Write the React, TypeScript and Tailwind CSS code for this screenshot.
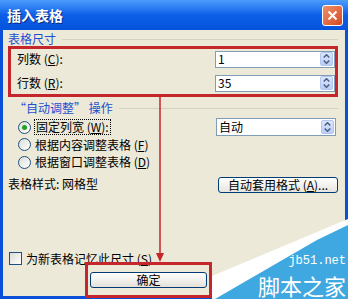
import React from 'react';

// small XP style spinner (up/down arrows)
const Spin = () => (
  <div className="w-[13px] h-[14px] rounded-[2px] border border-[#B3C6EF] bg-gradient-to-b from-[#DCE6FC] to-[#B9CDF6] flex flex-col items-center justify-center gap-[2px]">
    <svg width="7" height="4" viewBox="0 0 7 4">
      <path d="M0.7 3.5 L3.5 0.7 L6.3 3.5" fill="none" stroke="#4D6185" strokeWidth="1.5" />
    </svg>
    <svg width="7" height="4" viewBox="0 0 7 4">
      <path d="M0.7 0.5 L3.5 3.3 L6.3 0.5" fill="none" stroke="#4D6185" strokeWidth="1.5" />
    </svg>
  </div>
);

const Field = ({ value, h = 'h-[17px]' }: { value: string; h?: string }) => (
  <div className={`w-[120px] ${h} bg-white border border-[#7F9DB9] flex items-center justify-between pl-[2px] pr-[1px]`}>
    <span className="leading-none">{value}</span>
    <Spin />
  </div>
);

const Radio = ({ on }: { on?: boolean }) => (
  <div className="w-[13px] h-[13px] rounded-full border border-[#1C5180] bg-gradient-to-br from-[#DCDCD7] to-white flex items-center justify-center">
    {on && <div className="w-[5px] h-[5px] rounded-full bg-[#21A121]" />}
  </div>
);

export default function App() {
  return (
    <div className="relative w-[348px] h-[299px] overflow-hidden bg-[#0A4FD8] font-['Noto_Sans_CJK_SC','Liberation_Sans',sans-serif] text-[12px] text-black">
      {/* title bar */}
      <div className="h-[30px] flex items-center justify-between pl-[7px] pr-[5px] bg-gradient-to-b from-[#4C9CFC] via-[#0C5EE8] to-[#0553DC]">
        <span className="text-white text-[14px] font-bold leading-none [text-shadow:1px_1px_0_#0A2A80]">插入表格</span>
        <div className="w-[21px] h-[21px] rounded-[3px] border border-white bg-gradient-to-br from-[#F09068] to-[#D4451E] flex items-center justify-center">
          <svg width="11" height="11" viewBox="0 0 11 11">
            <path d="M1.5 1.5 L9.5 9.5 M9.5 1.5 L1.5 9.5" stroke="white" strokeWidth="2" />
          </svg>
        </div>
      </div>

      <div className="mx-[3px] h-[266px] bg-[#ECE9D8] pt-[2px]">
        {/* 表格尺寸 */}
        <div className="h-[14px] flex items-center pl-[5px] pr-[7px] gap-[6px]">
          <span className="text-[#1D50D0] leading-none">表格尺寸</span>
          <div className="flex-1 h-px bg-[#D5D2C0]" />
        </div>
        <div className="ml-[5px] w-[330px] h-[51px] border-[3px] border-[#C4262B] pl-[6px] pt-[1px] flex flex-col gap-[6px]">
          <div className="flex items-center justify-between">
            <span>列数 (<u>C</u>):</span>
            <Field value="1" />
          </div>
          <div className="flex items-center justify-between">
            <span>行数 (<u>R</u>):</span>
            <Field value="35" />
          </div>
        </div>

        {/* 自动调整 */}
        <div className="mt-[3px] h-[16px] flex items-center pl-[11px] pr-[7px] gap-[6px]">
          <span className="text-[#1D50D0] leading-none">“自动调整” 操作</span>
          <div className="flex-1 h-px bg-[#D5D2C0]" />
        </div>
        <div className="mt-[2px] flex justify-between pr-[9px]">
          <div className="pl-[15px]">
            <div className="h-[18px] flex items-center gap-[3px]">
              <Radio on />
              <span className="border border-dotted border-black px-[1px] leading-[14px]">固定列宽 (<u>W</u>):</span>
            </div>
            <div className="h-[17px] flex items-center gap-[4px]">
              <Radio />
              <span>根据内容调整表格 (<u>F</u>)</span>
            </div>
            <div className="h-[18px] flex items-center gap-[4px]">
              <Radio />
              <span>根据窗口调整表格 (<u>D</u>)</span>
            </div>
          </div>
          <Field value="自动" h="h-[18px]" />
        </div>

        {/* 表格样式 */}
        <div className="mt-[6px] h-[16px] flex items-center justify-between pl-[5px] pr-[7px]">
          <span className="-mt-[2px]">表格样式: 网格型</span>
          <div className="w-[120px] h-[16px] rounded-[3px] border border-[#003C74] bg-gradient-to-b from-white to-[#E6E4DC] flex items-center justify-center leading-none">
            自动套用格式 (<u>A</u>)...
          </div>
        </div>

        {/* 记忆尺寸 */}
        <div className="mt-[59px] h-[13px] flex items-center pl-[6px] gap-[4px]">
          <div className="w-[13px] h-[13px] border border-[#1C5180] bg-gradient-to-br from-[#DCDCD7] to-white" />
          <span className="leading-none">为新表格记忆此尺寸 (<u>S</u>)</span>
        </div>
        <div className="relative -mt-[3px] ml-[82px] w-[127px] h-[36px] border-[3px] border-[#C4262B] pl-[2px] pt-[7px]">
          <div className="w-[117px] h-[16px] rounded-[3px] border border-[#003C74] bg-gradient-to-b from-white to-[#E3E1D8] flex items-center justify-center leading-none">
            确定
          </div>
        </div>
      </div>

      {/* red arrow annotation */}
      <svg className="absolute left-[155px] top-[97px]" width="10" height="166" viewBox="0 0 10 166">
        <line x1="5" y1="0" x2="5" y2="157" stroke="#C4262B" strokeWidth="1.5" />
        <path d="M1 156 L9 156 L5 165 Z" fill="#C4262B" />
      </svg>

      {/* watermark */}
      <svg className="absolute right-0 bottom-0" width="136" height="80" viewBox="0 0 136 80">
        <polygon points="0,57 136,0 136,80 0,80" fill="#FFFFFF" />
        <polygon points="3,80 105,21 136,6 136,80" fill="#3FA8E0" />
      </svg>
      <span className="absolute right-[2px] top-[255px] font-['Liberation_Mono',monospace] text-[12px] leading-[12px] text-white">jb51.net</span>
      <span className="absolute right-[2px] top-[274px] text-[22px] leading-[22px] text-white">脚本之家</span>
    </div>
  );
}
